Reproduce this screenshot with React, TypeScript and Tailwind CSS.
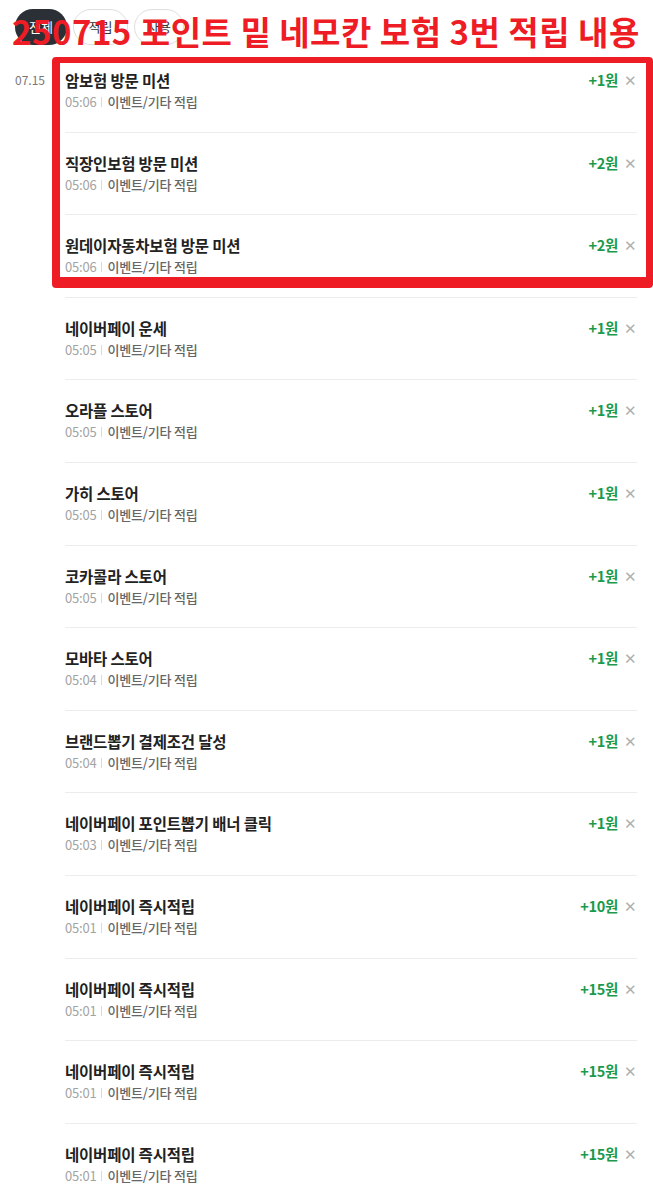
import React from 'react';

type Entry = {
  title: string;
  time: string;
  amount: number;
};

const entries: Entry[] = [
  { title: '암보험 방문 미션', time: '05:06', amount: 1 },
  { title: '직장인보험 방문 미션', time: '05:06', amount: 2 },
  { title: '원데이자동차보험 방문 미션', time: '05:06', amount: 2 },
  { title: '네이버페이 운세', time: '05:05', amount: 1 },
  { title: '오라플 스토어', time: '05:05', amount: 1 },
  { title: '가히 스토어', time: '05:05', amount: 1 },
  { title: '코카콜라 스토어', time: '05:05', amount: 1 },
  { title: '모바타 스토어', time: '05:04', amount: 1 },
  { title: '브랜드뽑기 결제조건 달성', time: '05:04', amount: 1 },
  { title: '네이버페이 포인트뽑기 배너 클릭', time: '05:03', amount: 1 },
  { title: '네이버페이 즉시적립', time: '05:01', amount: 10 },
  { title: '네이버페이 즉시적립', time: '05:01', amount: 15 },
  { title: '네이버페이 즉시적립', time: '05:01', amount: 15 },
  { title: '네이버페이 즉시적립', time: '05:01', amount: 15 },
];

const font = "font-['Noto_Sans_CJK_KR','Noto_Sans',sans-serif]";

function Row({ entry }: { entry: Entry }) {
  return (
    <li className="flex items-start border-b border-[#ececec] pt-5 pb-[19.6px]">
      <div className="flex-1">
        <div className="text-[15.5px] leading-5 font-semibold text-[#222] tracking-[-0.2px]">{entry.title}</div>
        <div className="mt-[2px] flex items-center text-[13px] leading-5 tracking-[-0.2px]">
          <span className="text-[#a3a3a3]">{entry.time}</span>
          <span className="mx-[5px] h-[10px] w-px bg-[#dadada]" />
          <span className="font-medium text-[#666]">이벤트/기타 적립</span>
        </div>
      </div>
      <div className="flex items-center leading-5">
        <span className="text-[14.5px] font-bold text-[#1b9a4b] tracking-[-0.3px]">+{entry.amount}원</span>
        <span className="ml-[6px] text-[15px] text-[#b0b0b0]">✕</span>
      </div>
    </li>
  );
}

export default function App() {
  return (
    <div className={`relative w-[653px] bg-white ${font}`}>
      <header className="flex h-[50px] items-start gap-[6px] pl-[15px] pt-[9px]">
        <button type="button" className="h-9 w-[52px] rounded-full bg-[#2b2f36] text-[13px] text-white">
          전체
        </button>
        <button type="button" className="h-9 w-[55px] rounded-full border border-[#dedede] text-[13px] text-[#333]">
          적립
        </button>
        <button type="button" className="h-9 w-[50px] rounded-full border border-[#dedede] text-[13px] text-[#333]">
          사용
        </button>
      </header>

      <section className="flex">
        <div className="w-[65px] shrink-0 pl-[15px] pt-5 text-[12px] leading-5 text-[#777]">07.15</div>
        <ul className="flex-1 pr-4">
          {entries.map((e, i) => (
            <Row key={i} entry={e} />
          ))}
        </ul>
      </section>

      {/* annotation overlay */}
      <div className="pointer-events-none absolute left-[12px] top-[11px] whitespace-nowrap text-[33px] leading-[40px] font-bold tracking-[0.5px] text-[#ee1c25]">
        250715 포인트 밑 네모칸 보험 3번 적립 내용
      </div>
      <div className="pointer-events-none absolute left-[52px] top-[57px] h-[231px] w-[601px] rounded-[4px] border-t-[6px] border-l-[8px] border-r-[7px] border-b-[11px] border-[#ee1c25]" />
    </div>
  );
}
